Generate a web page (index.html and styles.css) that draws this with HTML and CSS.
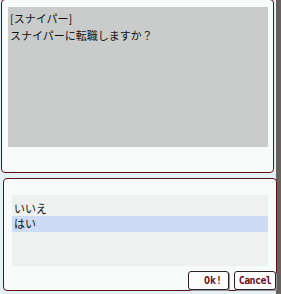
FILE: index.html
```html
<!DOCTYPE html>
<html>
<head>
	<meta charset="UTF-8">
	<title>転職</title>
	<link rel="stylesheet" href="styles.css">
</head>
<body>
	<div class="window message">
		<div class="msg-box">
			<p>[スナイパー]</p>
			<p>スナイパーに転職しますか？</p>
		</div>
	</div>
	<div class="window menu">
		<ul class="choices">
			<li>いいえ</li>
			<li class="selected">はい</li>
		</ul>
		<div class="buttons">
			<a class="btn ok" href="">Ok!</a>
			<a class="btn cancel" href="">Cancel</a>
		</div>
	</div>
</body>
</html>
```

FILE: styles.css
```css
:root {
	--frame: #5e0b18;
	--paper: #f7fbfa;
	--msg-gray: #c9cccb;
	--list-gray: #eef1f0;
	--pick: #cddcf4;
	--btn-text: #6e1020;
}
* {
	box-sizing: border-box;
}
body {
	margin: 0;
	width: 281px;
	height: 294px;
	overflow: hidden;
	background: linear-gradient(to right, #e4f1f4 0 276px, #65615b 276px);
	font-family: "Noto Sans CJK JP", "DejaVu Sans", sans-serif;
	font-size: 11px;
	color: #111;
	display: flex;
	flex-direction: column;
}
.window {
	background: var(--paper);
	border: 1px solid var(--frame);
	border-radius: 4px;
}
.message {
	margin: -1px 0 0 1px;
	width: 273px;
	height: 174px;
	padding: 7px 0 0 6px;
}
.msg-box {
	background: var(--msg-gray);
	width: 260px;
	height: 140px;
	padding: 3px 2px;
}
.msg-box p {
	margin: 0;
	line-height: 17px;
}
.menu {
	margin: 5px 0 0 3px;
	width: 274px;
	height: 113px;
	padding: 16px 0 0 8px;
}
.choices {
	list-style: none;
	margin: 0;
	padding: 6px 0 0;
	width: 256px;
	height: 71px;
	background: var(--list-gray);
}
.choices li {
	height: 15px;
	line-height: 14px;
	padding-left: 2px;
}
.choices .selected {
	height: 16px;
	background: var(--pick);
}
.buttons {
	display: flex;
	justify-content: flex-end;
	gap: 5px;
	margin-top: 5px;
}
.btn {
	display: block;
	height: 19px;
	background: #fff;
	border: 1px solid #2a2024;
	border-radius: 3px;
	box-shadow: 1px 1px 0 #9a9a9a;
	color: var(--btn-text);
	font-family: "DejaVu Sans Mono", monospace;
	font-size: 10px;
	font-weight: bold;
	line-height: 17px;
	text-decoration: none;
}
.ok {
	width: 41px;
	text-align: right;
	padding-right: 6px;
}
.cancel {
	width: 42px;
	text-align: center;
	letter-spacing: -0.6px;
}
```
